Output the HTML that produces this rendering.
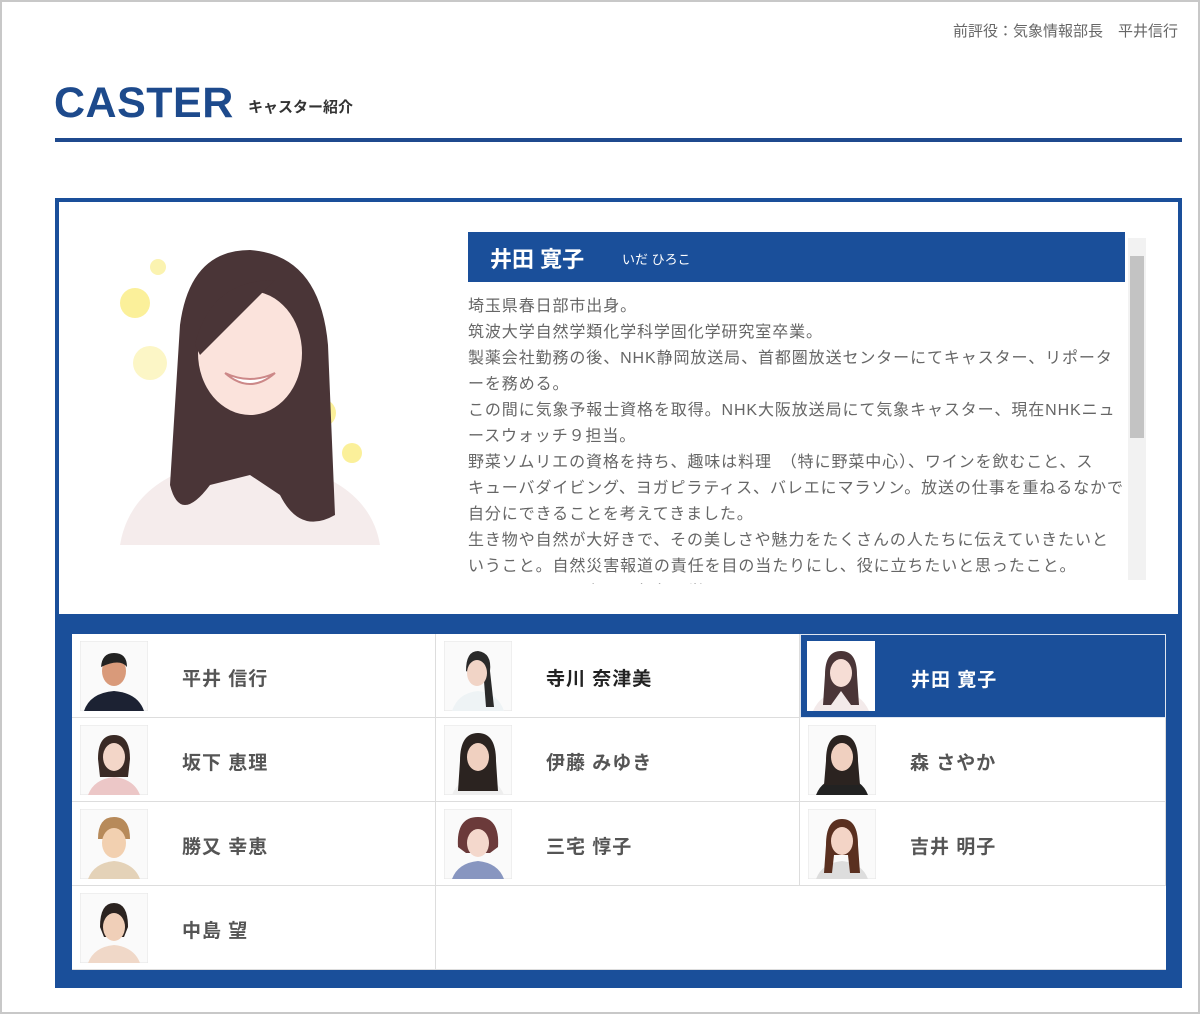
<!DOCTYPE html>
<html><head><meta charset="utf-8"><style>
*{margin:0;padding:0;box-sizing:border-box}
body{width:1200px;height:1014px;background:#fff;position:relative;overflow:hidden;font-family:"Liberation Sans","Noto Sans CJK JP",sans-serif}
.frame{left:0;top:0;width:1200px;height:1014px;border:2px solid #c8c8c8}
.abs{position:absolute}
.top{right:22px;top:20px;font-size:15px;color:#666}
.h1{left:54px;top:79px;font-size:43px;font-weight:bold;color:#1d4a8c;letter-spacing:0.5px}
.sub{left:248px;top:96px;font-size:15px;font-weight:bold;color:#333}
.rule{left:55px;top:138px;width:1127px;height:4px;background:#1f4a8e}
.box{left:55px;top:198px;width:1127px;height:790px;background:#1a4f9a}
.panel{left:59px;top:202px;width:1119px;height:412px;background:#fff}
.title{left:468px;top:232px;width:657px;height:50px;background:#1a4f9a;color:#fff}
.title b{position:absolute;left:22px;top:10px;font-size:22px}
.title span{position:absolute;left:154px;top:17px;font-size:13px}
.txt{left:468px;top:294px;width:656px;height:290px;overflow:hidden;font-size:16px;letter-spacing:0.9px;line-height:26px;color:#666;white-space:nowrap}
.sb{left:1128px;top:238px;width:18px;height:342px;background:#f2f2f2}
.thumb{left:1130px;top:256px;width:14px;height:182px;background:#c3c3c3}
.grid{left:72px;top:634px;width:1094px;height:336px;background:#fff}
.cell{position:absolute;width:364px;height:84px;border-right:1px solid #ddd;border-bottom:1px solid #ddd;background:#fff}
.cell .nm{position:absolute;left:110px;top:30px;font-size:19px;font-weight:bold;color:#555;letter-spacing:1px}
.cell svg{position:absolute;left:8px;top:7px}
.sel{background:#1a4f9a;border:1px solid #dfe6f0}
.sel .nm{color:#fff}
</style></head><body>
<div class="abs frame"></div>
<div class="abs top">前評役：気象情報部長　平井信行</div>
<div class="abs h1">CASTER</div>
<div class="abs sub">キャスター紹介</div>
<div class="abs rule"></div>
<div class="abs box"></div>
<div class="abs panel"></div>
<svg class="abs" style="left:100px;top:235px" width="300" height="330" viewBox="0 0 300 330">
<circle cx="35" cy="68" r="15" fill="#fbf09a"/><circle cx="58" cy="32" r="8" fill="#fbf3b0"/><circle cx="50" cy="128" r="17" fill="#fcf6c6"/><circle cx="222" cy="178" r="14" fill="#fbf09a"/><circle cx="252" cy="218" r="10" fill="#fbf09a"/>
<path d="M20 310 Q30 250 100 230 L190 230 Q270 250 280 310 Z" fill="#f5ecec"/>
<path d="M80 90 Q90 15 150 15 Q220 20 228 110 L235 280 Q200 300 180 260 L150 240 L110 250 Q80 290 70 250 Z" fill="#4a3537"/>
<ellipse cx="150" cy="118" rx="52" ry="62" fill="#fbe3dc"/>
<path d="M95 110 Q110 45 175 45 Q150 70 100 120 Z" fill="#4a3537"/>
<path d="M125 138 Q150 160 175 138 Q150 150 125 138" fill="#fff" stroke="#c88" stroke-width="2"/>
</svg>
<div class="abs title"><b>井田 寛子</b><span>いだ ひろこ</span></div>
<div class="abs txt">埼玉県春日部市出身。<br>筑波大学自然学類化学科学固化学研究室卒業。<br>製薬会社勤務の後、NHK静岡放送局、首都圏放送センターにてキャスター、リポータ<br>ーを務める。<br>この間に気象予報士資格を取得。NHK大阪放送局にて気象キャスター、現在NHKニュ<br>ースウォッチ９担当。<br>野菜ソムリエの資格を持ち、趣味は料理　（特に野菜中心）、ワインを飲むこと、ス<br>キューバダイビング、ヨガピラティス、バレエにマラソン。放送の仕事を重ねるなかで<br>自分にできることを考えてきました。<br>生き物や自然が大好きで、その美しさや魅力をたくさんの人たちに伝えていきたいと<br>いうこと。自然災害報道の責任を目の当たりにし、役に立ちたいと思ったこと。<br>そうしたことを考え、気象を学んでいきたいと思っています。</div>
<div class="abs sb"></div><div class="abs thumb"></div>
<div class="abs grid">
<div class="cell" style="left:0;top:0"><svg width="68" height="70"><rect width="68" height="70" fill="#fafafa" stroke="#e4e4e4"/><path d="M4 70 Q10 52 34 50 Q58 52 64 70Z" fill="#1c2233"/><ellipse cx="34" cy="30" rx="12" ry="15" fill="#d99a7a"/><path d="M21 26 Q22 12 34 12 Q47 12 47 26 Q40 17 21 26Z" fill="#222"/></svg><div class="nm">平井 信行</div></div>
<div class="cell" style="left:364px;top:0"><svg width="68" height="70"><rect width="68" height="70" fill="#fafafa" stroke="#e4e4e4"/><path d="M8 70 Q14 52 34 50 Q54 52 60 70Z" fill="#eef3f5"/><path d="M22 30 Q22 10 34 10 Q48 12 46 30 L50 66 L42 66 L40 40Z" fill="#2a2a2a"/><ellipse cx="33" cy="32" rx="10" ry="13" fill="#f1d4c6"/></svg><div class="nm" style="color:#222">寺川 奈津美</div></div>
<div class="cell sel" style="left:728px;top:0;width:366px"><svg width="68" height="70" style="left:6px;top:6px"><rect width="68" height="70" fill="#fff"/><path d="M6 70 Q14 52 34 50 Q54 52 62 70Z" fill="#f3eaea"/><path d="M18 34 Q18 10 34 10 Q50 10 50 34 L52 64 L44 64 L34 50 L24 64 L16 64Z" fill="#4a3537"/><ellipse cx="34" cy="32" rx="11" ry="14" fill="#f6ddd5"/></svg><div class="nm">井田 寛子</div></div>
<div class="cell" style="left:0;top:84px"><svg width="68" height="70"><rect width="68" height="70" fill="#fafafa" stroke="#e4e4e4"/><path d="M8 70 Q14 54 34 52 Q54 54 60 70Z" fill="#ecc7c7"/><path d="M18 34 Q18 10 34 10 Q50 10 50 34 L48 52 L20 52Z" fill="#3a2a25"/><ellipse cx="34" cy="32" rx="11" ry="14" fill="#f3d6c8"/></svg><div class="nm">坂下 恵理</div></div>
<div class="cell" style="left:364px;top:84px"><svg width="68" height="70"><rect width="68" height="70" fill="#fafafa" stroke="#e4e4e4"/><path d="M8 70 Q14 54 34 52 Q54 54 60 70Z" fill="#eee"/><path d="M16 36 Q16 8 34 8 Q52 8 52 36 L54 66 L14 66Z" fill="#2b2320"/><ellipse cx="34" cy="32" rx="11" ry="14" fill="#f0d0c0"/></svg><div class="nm">伊藤 みゆき</div></div>
<div class="cell" style="left:728px;top:84px;width:366px"><svg width="68" height="70"><rect width="68" height="70" fill="#fafafa" stroke="#e4e4e4"/><path d="M8 70 Q14 54 34 52 Q54 54 60 70Z" fill="#222"/><path d="M18 36 Q18 10 34 10 Q50 10 50 36 L52 60 L16 60Z" fill="#2b2320"/><ellipse cx="34" cy="32" rx="11" ry="14" fill="#f0d0c0"/></svg><div class="nm">森 さやか</div></div>
<div class="cell" style="left:0;top:168px"><svg width="68" height="70"><rect width="68" height="70" fill="#fafafa" stroke="#e4e4e4"/><path d="M8 70 Q14 54 34 52 Q54 54 60 70Z" fill="#e4d2b8"/><path d="M18 30 Q18 8 34 8 Q50 8 50 30Z" fill="#b78a5a"/><ellipse cx="34" cy="34" rx="12" ry="15" fill="#f2d0b0"/></svg><div class="nm">勝又 幸恵</div></div>
<div class="cell" style="left:364px;top:168px"><svg width="68" height="70"><rect width="68" height="70" fill="#fafafa" stroke="#e4e4e4"/><path d="M8 70 Q14 54 34 52 Q54 54 60 70Z" fill="#8896c0"/><path d="M14 38 Q12 8 34 8 Q56 8 54 38 L46 44 L22 44Z" fill="#6b3a3a"/><ellipse cx="34" cy="34" rx="11" ry="14" fill="#f4d8cc"/></svg><div class="nm">三宅 惇子</div></div>
<div class="cell" style="left:728px;top:168px;width:366px"><svg width="68" height="70"><rect width="68" height="70" fill="#fafafa" stroke="#e4e4e4"/><path d="M8 70 Q14 54 34 52 Q54 54 60 70Z" fill="#ddd"/><path d="M18 36 Q18 10 34 10 Q50 10 50 36 L52 64 L42 64 L40 46 L26 46 L24 64 L16 64Z" fill="#5a3020"/><ellipse cx="34" cy="32" rx="11" ry="14" fill="#f3d4c6"/></svg><div class="nm">吉井 明子</div></div>
<div class="cell" style="left:0;top:252px"><svg width="68" height="70"><rect width="68" height="70" fill="#fafafa" stroke="#e4e4e4"/><path d="M8 70 Q14 54 34 52 Q54 54 60 70Z" fill="#f0d8c8"/><path d="M20 34 Q20 10 34 10 Q48 10 48 34 L44 44 L24 44Z" fill="#2b2320"/><ellipse cx="34" cy="34" rx="11" ry="14" fill="#f0cfb8"/></svg><div class="nm">中島 望</div></div>
<div class="cell" style="left:364px;top:252px;width:730px;border-right:none"></div>
</div>
</body></html>
